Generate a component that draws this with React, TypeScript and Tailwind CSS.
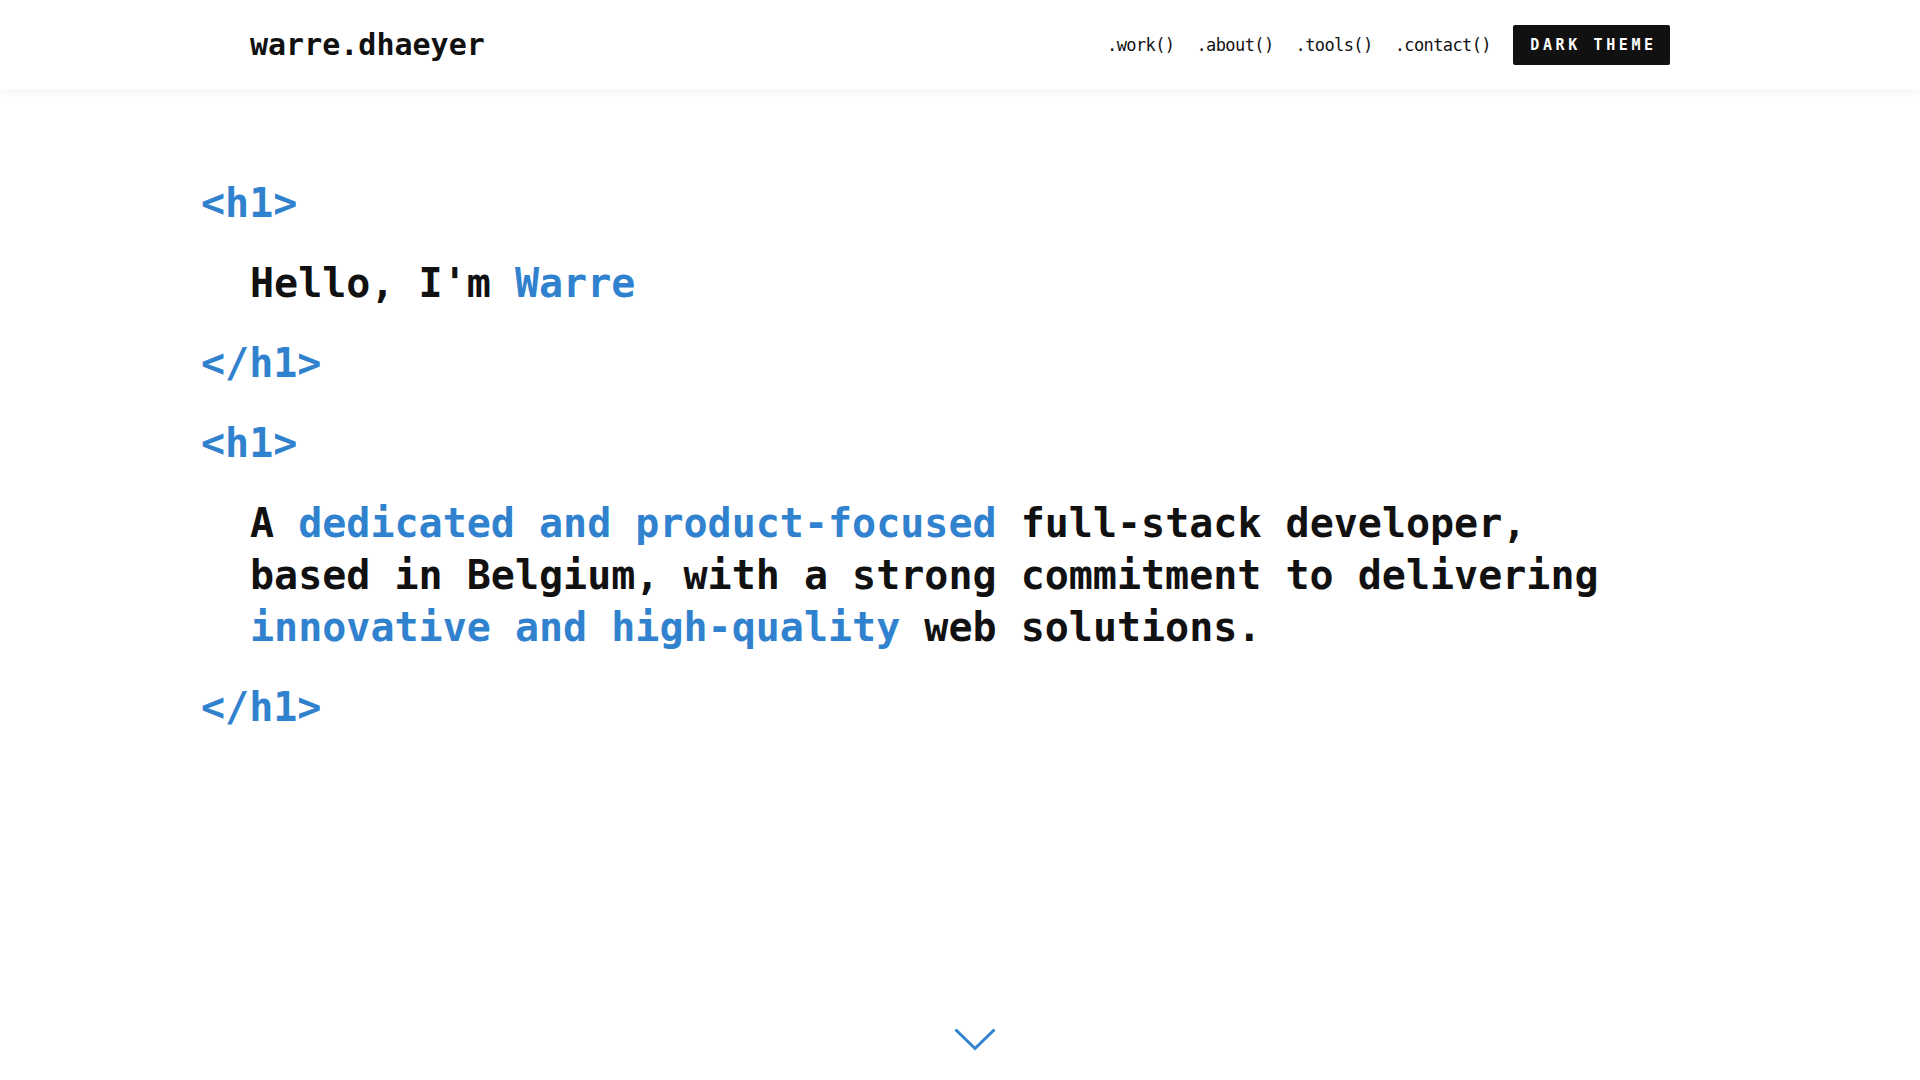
import { ReactNode } from 'react'

const mono = "font-['DejaVu_Sans_Mono','Liberation_Mono',monospace]"

const navLinks = ['.work()', '.about()', '.tools()', '.contact()']

function Blue({ children }: { children: ReactNode }) {
  return <span className="text-[#3182ce]">{children}</span>
}

function Tag({ children }: { children: ReactNode }) {
  return <div className="text-[#3182ce]">{children}</div>
}

export default function App() {
  return (
    <div className={`h-screen flex flex-col bg-white text-[#111111] ${mono}`}>
      <header className="h-[90px] shrink-0 flex items-center justify-between px-[250px] bg-white shadow-[0_2px_8px_rgba(0,0,0,0.06)] relative z-10">
        <a href="#" className="text-[30px] font-bold leading-none">
          warre.dhaeyer
        </a>
        <nav className="flex items-center gap-[22px]">
          {navLinks.map((link) => (
            <a key={link} href="#" className="text-[17px] tracking-[-0.6px] leading-none">
              {link}
            </a>
          ))}
          <button className="w-[157px] h-[40px] rounded-[2px] bg-[#111111] text-white text-[15px] font-bold tracking-[0.24em] leading-none flex items-center justify-center pl-[4px]">
            DARK THEME
          </button>
        </nav>
      </header>

      <main className="flex-1 pt-[87px] pl-[201px]">
        <div className="flex flex-col gap-[28px] text-[40px] font-bold leading-[52px]">
          <Tag>&lt;h1&gt;</Tag>
          <div className="pl-[49px]">
            Hello, I'm <Blue>Warre</Blue>
          </div>
          <Tag>&lt;/h1&gt;</Tag>
          <Tag>&lt;h1&gt;</Tag>
          <p className="pl-[49px] w-[1430px]">
            A <Blue>dedicated and product-focused</Blue> full-stack developer, based in Belgium,
            with a strong commitment to delivering <Blue>innovative and high-quality</Blue> web
            solutions.
          </p>
          <Tag>&lt;/h1&gt;</Tag>
        </div>
      </main>

      <div className="shrink-0 flex justify-center pl-[29px] pb-[29px]">
        <svg width="42" height="23" viewBox="0 0 42 23" fill="none">
          <polyline points="1.5,1.5 21,20.5 40.5,1.5" stroke="#3182ce" strokeWidth="3" />
        </svg>
      </div>
    </div>
  )
}
